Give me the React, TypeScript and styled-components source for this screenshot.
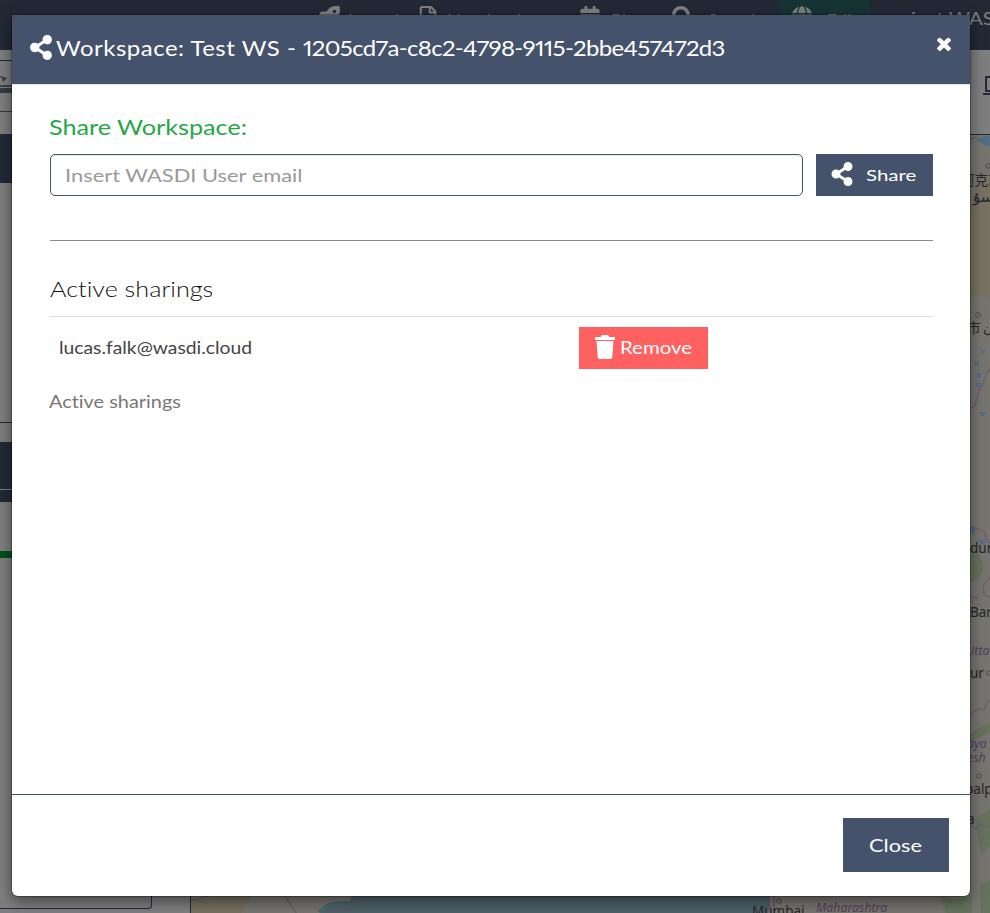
import React from "react";
import styled, { createGlobalStyle } from "styled-components";
import { FaShareAlt, FaRocket, FaCalendarAlt, FaGlobe, FaRegFileAlt, FaSearch } from "react-icons/fa";

const navy = "#44526b";

const GlobalStyle = createGlobalStyle`
  *, *::before, *::after { box-sizing: border-box; }
  html, body, #root { height: 100%; }
  body { margin: 0; overflow: hidden; background: #7f7f7f; font-family: Lato, "Liberation Sans", sans-serif; }
`;

const Page = styled.div`
  position: relative;
  height: 913px;
  width: 990px;
  overflow: hidden;
  display: flex;
  flex-direction: column;
`;

const TopBar = styled.nav`
  flex: 0 0 50px;
  display: flex;
  background: #222935;
  color: #7f7f7f;
  padding-left: 307px;
`;

const NavItem = styled.div<{ $w: number; $active?: boolean; $gap?: number }>`
  flex: 0 0 ${(p) => p.$w}px;
  min-width: 0;
  height: 50px;
  display: flex;
  gap: ${(p) => p.$gap ?? 14}px;
  padding: 6px 0 0 11px;
  font-size: 18px;
  line-height: 28px;
  white-space: nowrap;
  background: ${(p) => (p.$active ? "#173435" : "transparent")};
  svg { flex: none; width: 22px; height: 22px; }
`;

const Columns = styled.div`
  flex: 1;
  display: flex;
  min-height: 0;
`;

const SidePanel = styled.aside`
  flex: 0 0 191px;
  border-right: 1px solid #222a38;
  display: flex;
  flex-direction: column;
`;

const Strip = styled.div<{ $h: number; $color?: string }>`
  flex: 0 0 ${(p) => p.$h}px;
  background: ${(p) => p.$color ?? "#7f7f7f"};
`;

const PanelBox = styled.div`
  width: 152px;
  height: 351px;
  border: solid #222a38;
  border-width: 0 1px 1px 0;
  border-radius: 0 0 4px 0;
`;

const MapColumn = styled.section`
  flex: 0 0 799px;
  overflow: hidden;
  display: flex;
  flex-direction: column;
`;

const MapTools = styled.div`
  height: 85px;
  border-bottom: 1px solid #222a38;
  display: flex;
  padding: 25px 0 0 791px;
  svg { flex: none; }
`;

const MapSvg = styled.svg`
  display: block;
  flex: none;
`;

const Dialog = styled.div`
  position: absolute;
  left: 12px;
  top: 15px;
  width: 958px;
  height: 881px;
  background: #fff;
  border-radius: 0 0 6px 6px;
  box-shadow: 0 5px 15px rgba(0, 0, 0, 0.5), 0 0 0 1px rgba(0, 0, 0, 0.25);
  display: flex;
  flex-direction: column;
`;

const DialogHeader = styled.header`
  flex: 0 0 70px;
  background: ${navy};
  border-bottom: 1px solid #e5e5e5;
  color: #fff;
  display: flex;
  justify-content: space-between;
  padding: 20px 19px 0 18px;
`;

const Title = styled.h1`
  margin: 0;
  display: flex;
  gap: 4px;
  font-weight: 400;
  svg { width: 22px; height: 25px; }
`;

const Label = styled.span<{ $size: number; $stretch?: number; $weight?: number }>`
  display: inline-block;
  font-size: ${(p) => p.$size}px;
  line-height: 26px;
  font-weight: ${(p) => p.$weight ?? 400};
  font-variant-ligatures: none;
  transform: scaleX(${(p) => p.$stretch ?? 1});
  transform-origin: left center;
  white-space: nowrap;
`;

const Tracked = styled.span<{ $track: number }>`
  letter-spacing: ${(p) => p.$track}px;
  font-variant-numeric: proportional-nums;
`;

const CloseIcon = styled.svg`
  width: 14px;
  height: 14px;
  margin-top: 2px;
`;

const DialogBody = styled.main`
  flex: 1;
  padding: 26px 37px 0 38px;
  display: flex;
  flex-direction: column;
`;

const ShareHeading = styled.h2`
  margin: 0 0 0 -1px;
  height: 43px;
  color: #28a745;
  font-weight: 400;
`;

const ShareRow = styled.div`
  display: flex;
  gap: 13px;
  height: 42px;
`;

const EmailField = styled.div`
  width: 753px;
  border: 1px solid ${navy};
  border-radius: 5px;
  padding: 7px 14px;
  color: #999;
  box-shadow: inset 0 1px 1px rgba(0, 0, 0, 0.075);
`;

const Button = styled.button<{ $w: number; $h: number; $danger?: boolean; $gap?: number; $left: number }>`
  width: ${(p) => p.$w}px;
  height: ${(p) => p.$h}px;
  border: 0;
  padding: 0 0 0 ${(p) => p.$left}px;
  background: ${(p) => (p.$danger ? "#ff6060" : navy)};
  color: #fff;
  font-family: inherit;
  display: flex;
  align-items: center;
  gap: ${(p) => p.$gap ?? 0}px;
  svg { flex: none; margin-bottom: 2px; }
`;

const Rule = styled.hr`
  width: 100%;
  height: 1px;
  margin: 44px 0 35px;
  border: 0;
  background: #8c8c8c;
`;

const ListHeading = styled.h3`
  margin: 0;
  height: 41px;
  color: #111;
  border-bottom: 1px solid #ddd;
  font-weight: 400;
`;

const SharingRow = styled.div`
  display: grid;
  grid-template-columns: 529px 1fr;
  padding-top: 10px;
  height: 72px;
  color: #444;
  > span { margin: 8px 0 0 9px; justify-self: start; }
`;

const Caption = styled.p`
  margin: 0 0 0 -1px;
  color: #777;
`;

const DialogFooter = styled.footer`
  flex: 0 0 102px;
  border-top: 1px solid ${navy};
  display: flex;
  justify-content: flex-end;
  padding: 23px 21px 0;
`;

function MapDrawing() {
  return (
    <MapSvg width="799" height="778" viewBox="191 135 799 778">
      <rect x="191" y="135" width="799" height="778" fill="#777570" />
      <path d="M970 205Q980 180 990 178V302Q978 290 970 300Z" fill="#777262" />
      <path d="M970 545q9 5 14 22l-5 12-9 3ZM970 735l10-8 10-5v10l-20 10ZM975 820l15-12v38l-9 8ZM940 896l14 4 18-4v17h-26ZM980 885l10-5v33h-9Z" fill="#65725c" />
      <g fill="#526d85">
        <path d="m976 139 14-4v11h-4ZM974 361h5v4h-5ZM981 350h4v3h-4ZM977 373h4v5h-4ZM979 412h7l-3 5ZM976 383h5v4h-5ZM970 526l5 1v7l-5-2ZM977 539l9 2-3 4Z" />
      </g>
      <path d="m970 140 6-3M970 408l5-2 4-15 4-7 3-10 4-5M971 527l13 4 3 10 3 2M990 576l-7 10 1 8 6 4M970 597l9 1M970 715l8-6 6 1 3-9 3-1M970 824l6 5 5-5 9 3" fill="none" stroke="#70606f" strokeWidth="1.5" />
      <path d="M191 913V901L215 896H253L241 913Z" fill="#777060" />
      <path d="m191 901 17-5M285 896l11 17" fill="none" stroke="#69626b" strokeWidth="1.5" />
      <path d="M322 913q8-8 20-7 17 1 11-10h416q2 9-1 17Z" fill="#4c6168" />
      <path d="M320 913q9-10 23-9 13 1 10-8" fill="none" stroke="#4b656d" strokeWidth="6" />
      <path d="M328 913q9-5 20-5 14-4 8-12M768 896l3 17M774 896v17" fill="none" stroke="#61576b" strokeWidth="1.5" />
      <g fill="none" stroke="#4b4b4b">
        <circle cx="988" cy="166" r="2.3" />
        <circle cx="978" cy="315" r="2.3" />
        <circle cx="989" cy="673" r="2.3" />
        <circle cx="979" cy="776" r="2.3" />
        <circle cx="779" cy="901" r="2.3" />
      </g>
      <g fontFamily="'Noto Sans', 'Noto Sans CJK SC', 'DejaVu Sans', sans-serif" fontSize="13.5" fill="#262626">
        <text x="961" y="185">阿克苏</text>
        <text x="973" y="202" fontSize="15">سۇ</text>
        <text x="967" y="333">市</text>
        <text x="983" y="333">ن</text>
        <text x="970" y="553">dur</text>
        <text x="970" y="617">Bar</text>
        <text x="970" y="678">ur</text>
        <text x="965" y="794">palp</text>
        <text x="967" y="824">a</text>
        <text x="752" y="916">Mumbai</text>
      </g>
      <g fontFamily="'Noto Sans', sans-serif" fontStyle="italic" fontSize="12.3" fill="#51405a">
        <text x="966" y="655">Utta</text>
        <text x="967" y="748">aya</text>
        <text x="967" y="762">esh</text>
        <text x="816" y="912">Maharashtra</text>
      </g>
    </MapSvg>
  );
}

function TrashIcon() {
  return (
    <svg width="22" height="24" viewBox="0 0 22 24" fill="#fff">
      <path d="M7 1.2Q7.500 0 9 0h4q1.500 0 2 1.200l.4.800H20q1 0 1 1v2H1V3q0-1 1-1h4.600ZM2.500 6h17l-1.200 16q-.1 2-2 2H5.700q-1.900 0-2-2Z" />
    </svg>
  );
}

export default function App() {
  return (
    <>
      <GlobalStyle />
      <Page>
        <TopBar>
          <NavItem $w={99} $gap={8}><FaRocket />Launch</NavItem>
          <NavItem $w={162} $gap={8}><FaRegFileAlt />Notebook</NavItem>
          <NavItem $w={93} $gap={10}><FaCalendarAlt />Plan</NavItem>
          <NavItem $w={119}><FaSearch />Search</NavItem>
          <NavItem $w={90} $active><FaGlobe />Edit</NavItem>
          <NavItem $w={120}><Label $size={17} $stretch={1.2}>project WASDI</Label></NavItem>
        </TopBar>
        <Columns>
          <SidePanel>
            <Strip $h={10} />
            <Strip $h={1} $color="#222a38" />
            <Strip $h={15} />
            <svg width="12" height="6" viewBox="0 0 12 6"><path d="M0 0 7 2 3 6 2 2 0 1Z" fill="#333a45" /></svg>
            <Strip $h={3} />
            <Strip $h={2} $color="#3d4249" />
            <Strip $h={1} />
            <Strip $h={5} $color="#373c47" />
            <Strip $h={18} />
            <Strip $h={1} $color="#333a44" />
            <Strip $h={22} />
            <Strip $h={49} $color="#222a37" />
            <Strip $h={239} />
            <Strip $h={1} $color="#222a38" />
            <Strip $h={19} />
            <Strip $h={47} $color="#222a37" />
            <Strip $h={1} />
            <Strip $h={12} $color="#222a37" />
            <Strip $h={49} />
            <Strip $h={7} $color="#00501c" />
            <PanelBox />
          </SidePanel>
          <MapColumn>
            <MapTools>
              <svg width="22" height="21" viewBox="0 0 22 21" fill="none" stroke="#222a38" strokeWidth="2">
                <path d="M4 16V2h16v14ZM1 19h20" />
              </svg>
            </MapTools>
            <MapDrawing />
          </MapColumn>
        </Columns>

        <Dialog role="dialog">
          <DialogHeader>
            <Title>
              <FaShareAlt />
              <Label $size={21} $stretch={1.14}>
                <Tracked $track={0.45}>Workspace: Test WS - </Tracked>
                <Tracked $track={-0.58}>1205cd7a-c8c2-4798-9115-2bbe457472d3</Tracked>
              </Label>
            </Title>
            <CloseIcon viewBox="302 302 1188 1252" preserveAspectRatio="none" fill="#fff">
              <path d="M1490 1322q0 40-28 68l-136 136q-28 28-68 28t-68-28l-294-294-294 294q-28 28-68 28t-68-28l-136-136q-28-28-28-68t28-68l294-294-294-294q-28-28-28-68t28-68l136-136q28-28 68-28t68 28l294 294 294-294q28-28 68-28t68 28l136 136q28 28 28 68t-28 68l-294 294 294 294q28 28 28 68z" />
            </CloseIcon>
          </DialogHeader>
          <DialogBody>
            <ShareHeading><Label $size={21} $stretch={1.2}>Share Workspace:</Label></ShareHeading>
            <ShareRow>
              <EmailField><Label $size={18} $stretch={1.215}>Insert WASDI User email</Label></EmailField>
              <Button $w={117} $h={42} $left={14} $gap={12}>
                <FaShareAlt size={24} />
                <Label $size={16} $stretch={1.28}>Share</Label>
              </Button>
            </ShareRow>
            <Rule />
            <ListHeading><Label $size={21} $stretch={1.2} $weight={300}>Active sharings</Label></ListHeading>
            <SharingRow>
              <Label $size={17} $stretch={1.135}>lucas.falk@wasdi.cloud</Label>
              <Button $w={129} $h={42} $left={15} $gap={4} $danger>
                <TrashIcon />
                <Label $size={17} $stretch={1.2}>Remove</Label>
              </Button>
            </SharingRow>
            <Caption><Label $size={17} $stretch={1.17}>Active sharings</Label></Caption>
          </DialogBody>
          <DialogFooter>
            <Button $w={106} $h={54} $left={26}><Label $size={18} $stretch={1.21}>Close</Label></Button>
          </DialogFooter>
        </Dialog>
      </Page>
    </>
  );
}
